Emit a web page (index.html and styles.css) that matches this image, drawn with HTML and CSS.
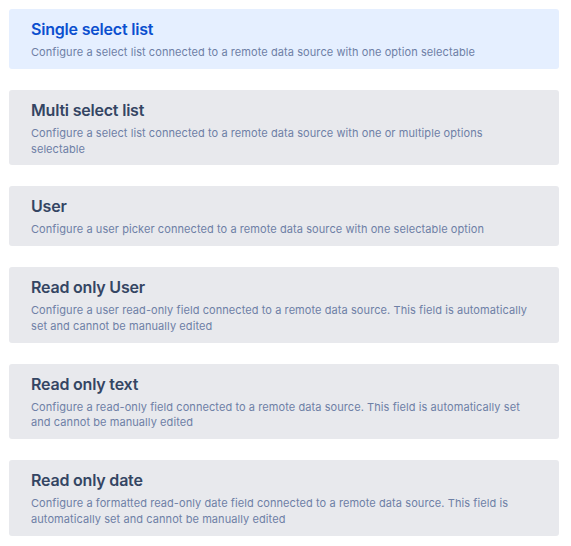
FILE: index.html
```html
<!DOCTYPE html>
<html>
<head>
<meta charset="utf-8">
<link rel="stylesheet" href="styles.css">
</head>
<body>
<div class="list">
  <div class="card selected">
    <div class="title">Single select list</div>
    <div class="desc">Configure a select list connected to a remote data source with one option selectable</div>
  </div>
  <div class="card">
    <div class="title">Multi select list</div>
    <div class="desc">Configure a select list connected to a remote data source with one or multiple options selectable</div>
  </div>
  <div class="card">
    <div class="title">User</div>
    <div class="desc">Configure a user picker connected to a remote data source with one selectable option</div>
  </div>
  <div class="card">
    <div class="title">Read only User</div>
    <div class="desc">Configure a user read-only field connected to a remote data source. This field is automatically set and cannot be manually edited</div>
  </div>
  <div class="card">
    <div class="title">Read only text</div>
    <div class="desc">Configure a read-only field connected to a remote data source. This field is automatically set and cannot be manually edited</div>
  </div>
  <div class="card">
    <div class="title">Read only date</div>
    <div class="desc">Configure a formatted read-only date field connected to a remote data source. This field is automatically set and cannot be manually edited</div>
  </div>
</div>
</body>
</html>
```

FILE: styles.css
```css
html, body {
  margin: 0;
  padding: 0;
  background: #ffffff;
}
body {
  font-family: Inter, "Noto Sans", sans-serif;
}
.list {
  display: flex;
  flex-direction: column;
  gap: 21px;
  padding: 9px 12px 0 9px;
}
.card {
  background: #e8e9ed;
  border-radius: 3px;
  padding: 10px 22px 8px 22px;
}
.card.selected {
  background: #e5efff;
}
.title {
  font-size: 16px;
  line-height: 20px;
  font-weight: 600;
  letter-spacing: -0.2px;
  color: #344563;
  margin-bottom: 6px;
}
.selected .title {
  color: #0b4fcf;
}
.desc {
  font-size: 11px;
  line-height: 15.75px;
  letter-spacing: 0.08px;
  color: #6e80a6;
  max-width: 500px;
}
```
